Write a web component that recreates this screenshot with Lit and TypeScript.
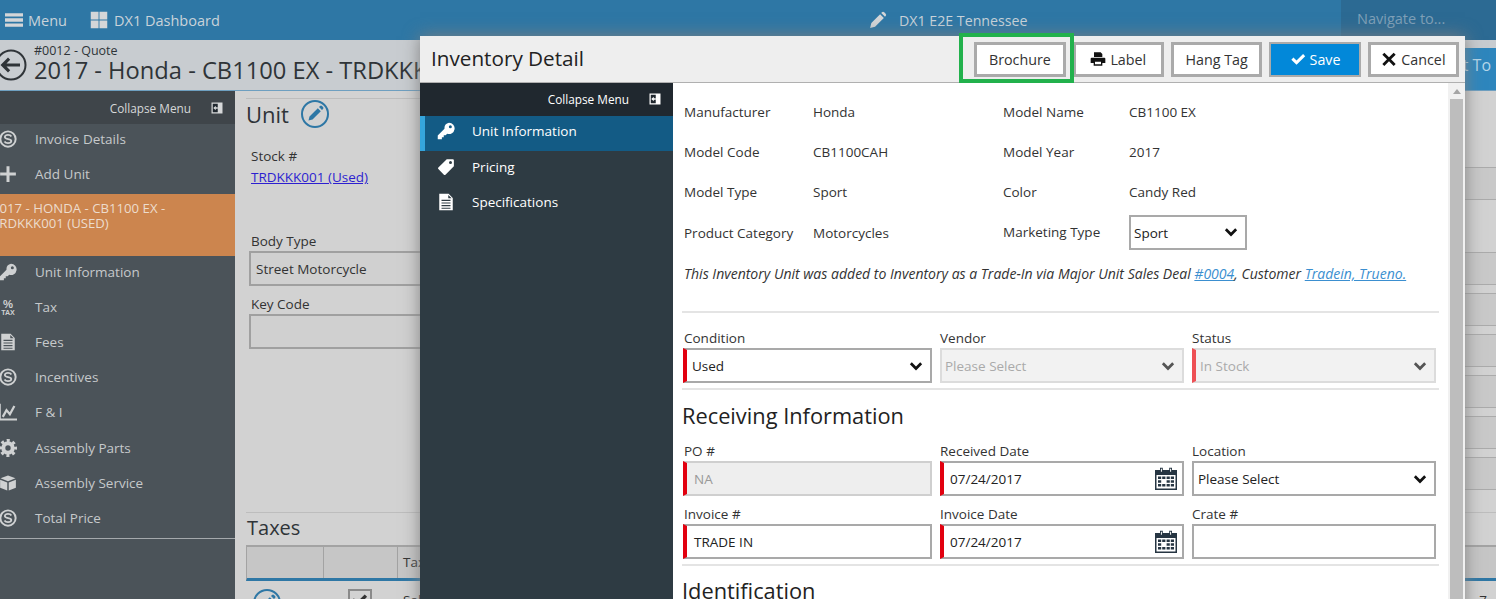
import { LitElement, html, css, svg } from "lit";
import { customElement } from "lit/decorators.js";

const S = svg`<circle cx="12" cy="12" r="10.2" fill="none" stroke="currentColor" stroke-width="2.6"/><path d="M16.5 8.6C15.5 7 13.8 6.6 12 6.6c-2.4 0-4.2 1-4.2 2.8 0 3.9 8.6 1.6 8.6 5.3 0 1.8-1.9 2.8-4.4 2.8-2 0-3.7-.6-4.7-2.2" fill="none" stroke="currentColor" stroke-width="2.4"/>`;

const P: Record<string, unknown> = {
  bars: svg`<path d="M0 3h24v4.4H0zM0 9.8h24v4.4H0zM0 16.6h24V21H0z"/>`,
  grid: svg`<path d="M1 1h10.4v10.4H1zM12.6 1H23v10.4H12.6zM1 12.6h10.4V23H1zM12.6 12.6H23V23H12.6z"/>`,
  pencil: svg`<path d="M1.5 22.5l1.6-6.6L14.8 4.2l5 5L8.1 20.9zM16.3 2.7l.9-.9a2.2 2.2 0 0 1 3.1 0l1.9 1.9a2.2 2.2 0 0 1 0 3.1l-.9.9z"/>`,
  check: svg`<path d="M2 13l3.2-3.2 4.6 4.6L19.6 4.6 22.8 7.8 9.8 20.8z"/>`,
  times: svg`<path d="M5 2.5l7 7 7-7 3 3-7 7 7 7-3 3-7-7-7 7-3-3 7-7-7-7z"/>`,
  print: svg`<path fill-rule="evenodd" d="M6 2h10l2.5 2.5V9H6zM2.5 10h19A1.5 1.5 0 0 1 23 11.500V18h-4.500v4h-13v-4H1v-6.500A1.500 1.500 0 0 1 2.500 10zM7.500 16v4h9v-4z"/>`,
  chev: svg`<path d="M1.500 9l3.300-3.300 7.200 7.200 7.200-7.200L22.500 9 12 19.500z"/>`,
  key: svg`<path fill-rule="evenodd" d="M16 1a7.500 7.500 0 1 1-2.300 14.640L11.500 17.800H9v2.500H6.500V23H1v-5l9-9A7.500 7.500 0 0 1 16 1zm1.800 3.300a2 2 0 1 0 0 4 2 2 0 0 0 0-4z"/>`,
  tag: svg`<path fill-rule="evenodd" d="M13 1.500h8a1.500 1.500 0 0 1 1.500 1.500v8L11.300 22.200a1.500 1.500 0 0 1-2.100 0L1.800 14.800a1.500 1.500 0 0 1 0-2.100zM18 4a2 2 0 1 0 0 4 2 2 0 0 0 0-4z"/>`,
  file: svg`<path fill-rule="evenodd" d="M3 1h12.500L21 6.500V23H3zM6 9v1.500h12V9zM6 12.500V14h12v-1.500zM6 16v1.500h12V16zM6 19.500V21h12v-1.500zM15 2.500V7h4.500z"/>`,
  gear: svg`<circle cx="12" cy="12" r="6.300" fill="none" stroke="currentColor" stroke-width="5.400"/><circle cx="12" cy="12" r="10" fill="none" stroke="currentColor" stroke-width="4" stroke-dasharray="4 3.854" stroke-dashoffset="2"/>`,
  cube: svg`<path d="M12 2l10 3.800L12 9.600 2 5.800zM1.500 7.800l9.500 3.600V22l-9.500-3.800zM22.500 7.800L13 11.400V22l9.500-3.800z"/>`,
  chart: svg`<path d="M1.200 1v21h22.800" fill="none" stroke="currentColor" stroke-width="2.400"/><path d="M5 18.500l5-9 4.500 5.500 6-11" fill="none" stroke="currentColor" stroke-width="3"/>`,
  plus: svg`<path d="M10 1.500h4V10h8.500v4H14v8.500h-4V14H1.500v-4H10z"/>`,
  s: S,
  tax: svg`<text x="12" y="13" text-anchor="middle" font-size="15" font-weight="700" font-family="Liberation Sans">%</text><text x="12" y="23" text-anchor="middle" font-size="9.500" font-weight="700" font-family="Liberation Sans">TAX</text>`,
  collapse: svg`<path d="M1 1h22v22H1z"/><path d="M3.500 3.500h10v17h-10z" fill="#1f272e"/><path d="M4.500 12l5-4.500v3h4v3h-4v3z"/>`,
  back: svg`<circle cx="16" cy="16" r="14.500" fill="none" stroke="currentColor" stroke-width="2"/><path d="M5.500 16l7.500-7.500 2.200 2.200-3.700 3.700H25v3.200H11.500l3.700 3.700L13 23.500z"/>`,
  edit: svg`<circle cx="14" cy="14" r="13" fill="none" stroke="currentColor" stroke-width="2"/><path d="M7.500 20.500l1-4L16.800 8.200l3 3L11.500 19.500zM18 7l1-1a1.400 1.400 0 0 1 2 0l1 1a1.400 1.400 0 0 1 0 2l-1 1z"/>`,
  cal: svg`<path d="M1 3h22v20H1z" fill="#263542"/><path d="M2.500 8h19v13.500h-19z" fill="#fff"/><path d="M6 .8h2.800v5H6zM15.200 .8H18v5h-2.800z" fill="#263542"/><path d="M6.900 1.800h1v3h-1zM16.100 1.800h1v3h-1z" fill="#fff"/><path d="M4 9.500h3.200v2.600H4zM8.200 9.500h3.200v2.600H8.200zM12.600 9.500h3.200v2.600h-3.200zM16.800 9.500H20v2.600h-3.200zM4 13.200h3.200v2.600H4zM12.600 13.200h3.200v2.600h-3.200zM16.800 13.200H20v2.600h-3.200zM4 17h3.200v2.600H4zM8.200 17h3.200v2.600H8.200zM12.600 17h3.200v2.600h-3.200zM16.800 17H20v2.600h-3.200z" fill="#263542"/>`,
};

const ic = (name: string, cls = "") =>
  html`<svg class="ic ${cls}" viewBox="0 0 ${name === "back" ? 32 : name === "edit" ? 28 : 24} ${name === "back" ? 32 : name === "edit" ? 28 : 24}" fill="currentColor">${P[name]}</svg>`;

const navTop = [["s", "Invoice Details"], ["plus", "Add Unit"]];
const navBottom = [
  ["key", "Unit Information"], ["tax", "Tax"], ["file", "Fees"], ["s", "Incentives"], ["chart", "F & I"],
  ["gear", "Assembly Parts"], ["cube", "Assembly Service"], ["s", "Total Price"],
];
const modalNav = [["key", "Unit Information", true], ["tag", "Pricing", false], ["file", "Specifications", false]];

@customElement("app-root")
export class AppRoot extends LitElement {
  static styles = css`
    :host { display: block; height: 599px; overflow: hidden; position: relative; background: #fff;
      font-family: "Open Sans", "Noto Sans", sans-serif; font-size: 13.5px; color: #333; }
    * { box-sizing: border-box; }
    .ic { display: block; flex: none; }
    .top { height: 40px; background: #2e77a5; color: #c9d3da; display: flex; align-items: center; font-size: 14.5px; }
    .top .ic { width: 18px; height: 18px; color: #d4d6d8; }
    .menu { display: flex; align-items: center; gap: 5px; margin-left: 5px; width: 85px; }
    .dash { display: flex; align-items: center; gap: 6px; width: 779px; }
    .center { display: flex; align-items: center; gap: 12px; width: 472px; font-size: 14.2px; }
    .nav-to { width: 155px; height: 40px; background: #2c6a93; color: #7fa0b8; line-height: 38px; padding-left: 16px; font-size: 14.5px; }
    .title { height: 51px; background: #c8ccd0; border-bottom: 1px solid #6e9fc0; display: flex; align-items: flex-start; position: relative; color: #2f3438; }
    .back { width: 32px; height: 32px; margin: 9px 7px 0 -5px; color: #2f3438; }
    .ttext { padding-top: 4px; white-space: nowrap; }
    .ttext small { display: block; font-size: 12.5px; line-height: 14px; }
    .ttext div { font-size: 23.7px; line-height: 24px; }
    .conv { margin-left: auto; width: 100px; height: 42px; margin-top: 8px; background: #2e86bd; color: #b5d6ea; font-size: 16px; line-height: 34px; text-align: right; padding-right: 5px; }
    .body { display: flex; height: 508px; }
    .side { width: 235px; flex: none; background: #4b5359; color: #c6c9cb; }
    .coll { height: 33px; background: #3f454a; display: flex; align-items: center; justify-content: flex-end; gap: 20px; padding-right: 12px; font-size: 11.8px; color: #d6d8d9; }
    .coll .ic { width: 12px; height: 12px; }
    .item { height: 35.15px; display: flex; align-items: center; gap: 18px; margin-left: -1px; font-size: 13.5px; }
    .item .ic { width: 18px; height: 18px; color: #cfd1d2; }
    .nav-a { margin-top: -3px; }
    .orange { height: 62px; background: #cc854e; color: #ecdccd; font-size: 13.2px; line-height: 15px; padding-top: 7px; margin-top: 3px; margin-bottom: -2px; text-indent: -8px; overflow: hidden; }
    .orange div { white-space: nowrap; }
    .nav-b { position: relative; }
    .rule { height: 1px; background: #a5a9ac; margin-top: 3px; }
    .main { flex: 1; min-width: 0; background: #d2d2d2; display: flex; flex-direction: column; padding-top: 7px; }
    .upper { height: 414px; display: flex; flex: none; }
    .lcol { width: 600px; margin-left: 11px; border-top: 1px solid #bdbdbd; }
    .lcol h2 { margin: -1px 0 0; font-weight: 400; font-size: 22px; line-height: 32px; height: 32px; display: flex; align-items: center; gap: 12px; color: #2f3438; }
    .lcol h2 .ic { width: 28px; height: 28px; color: #2e77a5; }
    .lbl { display: block; margin-left: 5px; line-height: 20px; }
    .stock { margin-top: 16px; }
    .stock a { display: block; margin-left: 5px; line-height: 20px; margin-top: 1px; color: #2d1fd0; text-decoration: underline; }
    .bt { margin-top: 44px; }
    .bx { margin-left: 3px; height: 35px; border: 2px solid #a0a0a0; background: #d0d0d0; line-height: 32px; padding-left: 5px; color: #333; }
    .kc { margin-top: 8px; }
    .rcol { margin-left: auto; width: 60px; padding-top: 69px; }
    .rbox { height: 33px; margin-top: 8px; border-top: 1px solid #ababab; border-bottom: 1px solid #ababab; background: #c9c9c9; }
    .rbox.gap { margin-top: 52px; }
    .rbox:first-child { margin-top: 0; }
    .taxes { margin-left: 11px; border-top: 1px solid #bdbdbd; flex: 1; }
    .taxes h2 { margin: 0 0 2px; padding-left: 1px; font-weight: 400; font-size: 20px; line-height: 30px; color: #2f3438; }
    .thead { display: grid; grid-template-columns: 77px 74px 1fr; height: 36px; border-top: 2px solid #a3a3a3; border-left: 1px solid #a3a3a3; border-bottom: 3px solid #2e77a5; background: #c6c6c6; }
    .thead div { border-right: 1px solid #a3a3a3; padding: 6px 0 0 5px; }
    .thead div:last-child { border-right: 0; }
    .trow { display: grid; grid-template-columns: 77px 74px 1fr; padding-top: 8px; }
    .trow .ic { width: 28px; height: 28px; color: #2e77a5; margin-left: 7px; }
    .cb { width: 24px; height: 24px; border: 2px solid #8a8a8a; margin-left: 25px; color: #333; }
    .cb .ic { width: 18px; height: 18px; margin: 0; color: #333; }
    .tv { display: flex; justify-content: space-between; padding: 2px 9px 0 6px; }

    .modal { position: absolute; left: 420px; top: 36px; width: 1045px; height: 600px; background: #fff; display: flex; flex-direction: column; box-shadow: 0 0 16px rgba(125,125,125,.95); }
    .mh { height: 47px; background: #eee; border-bottom: 1px solid #b0b0b0; display: flex; align-items: center; flex: none; padding: 0 6px 0 11px; }
    .mh h1 { margin: 0 0 3px; font-weight: 400; font-size: 20.7px; color: #222; flex: 1; white-space: nowrap; }
    .btns { display: flex; gap: 7.2px; }
    .btn { width: 91.2px; height: 35px; border: 3px solid #aaa; background: #fff; color: #333; display: flex; align-items: center; justify-content: center; gap: 4px; font-size: 14.3px; }
    .btn .ic { width: 16px; height: 16px; color: #111; }
    .btn.save { background: #0288d9; color: #fff; border-width: 2px; }
    .btn.save .ic { color: #fff; }
    .hl { position: absolute; left: 539px; top: -3px; width: 115px; height: 50px; border: 4px solid #22b14c; pointer-events: none; }
    .mb { flex: 1; display: flex; min-height: 0; }
    .ms { width: 253px; flex: none; background: #2e3b43; color: #fff; }
    .ms .coll { background: #20282f; color: #fff; padding-right: 12px; gap: 20px; padding-bottom: 2px; }
    .mi { height: 35px; display: flex; align-items: center; gap: 17px; padding: 0 0 3px 12px; font-size: 13.5px; border-left: 5px solid transparent; }
    .mi .ic { width: 18px; height: 18px; color: #fff; }
    .mi.on { background: #135b85; border-left-color: #35a5dc; padding-bottom: 5px; }
    .mc { flex: 1; min-width: 0; padding: 9px 9px 0 9px; color: #333; }
    .det { display: grid; grid-template-columns: 129px 190px 126px 1fr; padding-left: 2px; }
    .det > div { height: 40px; display: flex; align-items: center; white-space: nowrap; }
    .det > div.low { padding-top: 1px; }
    .mk { width: 118px; height: 35px; border: 2px solid #a9a9a9; padding: 0 7px 0 3px; display: flex; align-items: center; justify-content: space-between; color: #222; }
    .mk span { padding-top: 1px; }
    .ital { font-style: italic; height: 42px; line-height: 43px; padding-left: 2px; white-space: nowrap; color: #333; font-size: 14.04px; }
    .ital a { color: #3b8fd0; text-decoration: underline; }
    hr { border: 0; height: 2px; background: #e4e4e4; margin: 0; }
    .h1 { margin-top: 17px; }
    .form { display: grid; grid-template-columns: 249px 244px 244px; column-gap: 8px; padding-left: 1px; }
    .fld label { display: block; height: 20px; line-height: 20px; }
    .fld:first-child label { padding-left: 1px; }
    .ctl { height: 35px; border: 2px solid #a9a9a9; display: flex; align-items: center; justify-content: space-between; padding: 0 7px 0 4px; background: #fff; color: #222; }
    .ctl.req { border-left: 4px solid #e2000f; padding-left: 5px; }
    .ctl.txt { padding-left: 6px; }
    .fld:first-child .ctl.txt { padding-left: 7px; }
    .ctl.dis { background: #f2f2f2; border-color: #dcdcdc; color: #aaa; padding-left: 3px; }
    .ctl.dis .ic { color: #555; }
    .ctl.dis.req { border-left-color: #ee5055; padding-left: 4px; }
    .ctl.ro { background: #eee; border-color: #cfcfcf; color: #999; }
    .ctl.ro.req { border-left-color: #e2000f; }
    .ctl .chev { width: 14px; height: 14px; color: #111; }
    .ctl.dis .chev { color: #555; }
    .ctl .cal { width: 24px; height: 24px; margin-right: -3px; }
    .mk .chev { width: 14px; height: 14px; color: #111; }
    .sec { margin: 0; font-weight: 400; font-size: 21.8px; color: #222; line-height: 32px; }
    .h2 { margin-top: 10px; }
    .r0 { margin-top: 15px; }
    .r1 { margin-top: 9px; }
    .r3 { margin-top: 8px; }
    .h3 { margin-top: 5px; }
    .h4 { margin-top: 9px; }
    .sb { width: 17px; flex: none; background: #f1f1f1; padding: 0 2px; }
    .sb i { display: block; width: 0; height: 0; margin: 6px auto 5px; border: 4px solid transparent; border-top: 0; border-bottom: 5px solid #a5a5a5; }
    .sb b { display: block; height: 500px; background: #bdbdbd; }
  `;

  private field(label: string, value: string, cls: string, icon: string) {
    return html`<div class="fld"><label>${label}</label>
      <div class="ctl ${cls}"><span>${value}</span>${icon === "chev" ? ic("chev", "chev") : icon === "cal" ? ic("cal", "cal") : ""}</div></div>`;
  }

  render() {
    return html`
      <div class="top">
        <div class="menu">${ic("bars")}<span>Menu</span></div>
        <div class="dash">${ic("grid")}<span>DX1 Dashboard</span></div>
        <div class="center">${ic("pencil")}<span>DX1 E2E Tennessee</span></div>
        <div class="nav-to">Navigate to...</div>
      </div>
      <div class="title">
        ${ic("back", "back")}
        <div class="ttext"><small>#0012 - Quote</small><div>2017 - Honda - CB1100 EX - TRDKKK001 (Used)</div></div>
        <div class="conv">Convert To</div>
      </div>
      <div class="body">
        <div class="side">
          <div class="coll"><span>Collapse Menu</span>${ic("collapse")}</div>
          <div class="nav-a">${navTop.map(([i, t]) => html`<div class="item">${ic(i)}<span>${t}</span></div>`)}</div>
          <div class="orange"><div>2017 - HONDA - CB1100 EX -</div><div>TRDKKK001 (USED)</div></div>
          <div class="nav-b">${navBottom.map(([i, t]) => html`<div class="item">${ic(i)}<span>${t}</span></div>`)}</div>
          <div class="rule"></div>
        </div>
        <div class="main">
          <div class="upper">
            <div class="lcol">
              <h2>Unit ${ic("edit")}</h2>
              <div class="stock"><span class="lbl">Stock #</span><a>TRDKKK001 (Used)</a></div>
              <div class="bt"><span class="lbl">Body Type</span><div class="bx">Street Motorcycle</div></div>
              <div class="kc"><span class="lbl">Key Code</span><div class="bx"></div></div>
            </div>
            <div class="rcol">
              <div class="rbox"></div><div class="rbox gap"></div><div class="rbox"></div><div class="rbox"></div>
              <div class="rbox"></div><div class="rbox"></div><div class="rbox"></div>
            </div>
          </div>
          <div class="taxes">
            <h2>Taxes</h2>
            <div class="thead"><div></div><div></div><div>Tax Name</div></div>
            <div class="trow">${ic("edit")}<div class="cb">${ic("check")}</div><div class="tv"><span>Sales</span><span>7</span></div></div>
          </div>
        </div>
      </div>

      <div class="modal">
        <div class="mh">
          <h1>Inventory Detail</h1>
          <div class="btns">
            <div class="btn">Brochure</div>
            <div class="btn">${ic("print")}Label</div>
            <div class="btn">Hang Tag</div>
            <div class="btn save">${ic("check")}Save</div>
            <div class="btn">${ic("times")}Cancel</div>
          </div>
          <div class="hl"></div>
        </div>
        <div class="mb">
          <div class="ms">
            <div class="coll"><span>Collapse Menu</span>${ic("collapse")}</div>
            ${modalNav.map(([i, t, on]) => html`<div class="mi ${on ? "on" : ""}">${ic(i as string)}<span>${t}</span></div>`)}
          </div>
          <div class="mc">
            <div class="det">
              <div>Manufacturer</div><div>Honda</div><div>Model Name</div><div>CB1100 EX</div>
              <div>Model Code</div><div>CB1100CAH</div><div>Model Year</div><div>2017</div>
              <div>Model Type</div><div>Sport</div><div>Color</div><div>Candy Red</div>
              <div class="low">Product Category</div><div class="low">Motorcycles</div><div>Marketing Type</div>
              <div><div class="mk"><span>Sport</span>${ic("chev", "chev")}</div></div>
            </div>
            <div class="ital">This Inventory Unit was added to Inventory as a Trade-In via Major Unit Sales Deal <a>#0004</a>, Customer <a>Tradein, Trueno.</a></div>
            <hr class="h1" />
            <div class="form r0">
              ${this.field("Condition", "Used", "req", "chev")}
              ${this.field("Vendor", "Please Select", "dis", "chev")}
              ${this.field("Status", "In Stock", "dis req", "chev")}
            </div>
            <hr class="h3" />
            <h2 class="sec h2">Receiving Information</h2>
            <div class="form r1">
              ${this.field("PO #", "NA", "ro req txt", "")}
              ${this.field("Received Date", "07/24/2017", "req txt", "cal")}
              ${this.field("Location", "Please Select", "", "chev")}
            </div>
            <div class="form r3">
              ${this.field("Invoice #", "TRADE IN", "req txt", "")}
              ${this.field("Invoice Date", "07/24/2017", "req txt", "cal")}
              ${this.field("Crate #", "", "", "")}
            </div>
            <hr class="h3" />
            <h2 class="sec h4">Identification</h2>
          </div>
          <div class="sb"><i></i><b></b></div>
        </div>
      </div>
    `;
  }
}
